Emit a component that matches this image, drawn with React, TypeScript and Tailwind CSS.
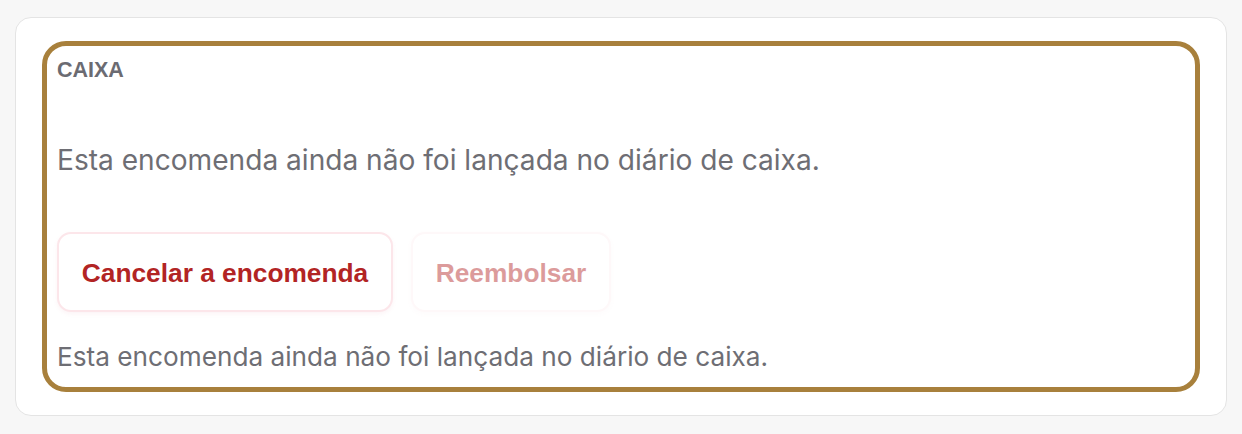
import React from "react";

export default function App() {
  return (
    <div className="w-[1242px] h-[434px] bg-[#f7f7f7] pt-[17px] pl-[15px]" style={{ fontFamily: "Inter, 'Liberation Sans', sans-serif" }}>
      <div className="w-[1212px] h-[399px] bg-white border border-[#e4e4e4] rounded-[16px] pt-[23px] px-[26px]">
        <div className="h-[351px] border-[5px] border-[#a8803c] rounded-[24px] pt-[10px] px-[10px]">
          <div className="text-[21.5px] leading-[28px] font-bold text-[#6b6b72] font-['Liberation_Sans',Arial,sans-serif]">CAIXA</div>
          <p className="mt-[58px] text-[28.1px] leading-[36px] text-[#6e6e74]">
            Esta encomenda ainda não foi lançada no diário de caixa.
          </p>
          <div className="mt-[54px] flex gap-[18px]">
            <button className="h-[80px] w-[336px] pt-[3px] rounded-[14px] border-2 border-[#fce6ea] bg-white shadow-[0_2px_4px_rgba(220,120,140,0.08)] text-[26.3px] font-bold text-[#b22424] font-['Liberation_Sans',Arial,sans-serif]">
              Cancelar a encomenda
            </button>
            <button disabled className="h-[80px] w-[200px] pt-[3px] rounded-[14px] border-2 border-[#fdf0f2] bg-white shadow-[0_2px_4px_rgba(220,120,140,0.05)] text-[26.3px] font-bold text-[#b22424] opacity-45 font-['Liberation_Sans',Arial,sans-serif]">
              Reembolsar
            </button>
          </div>
          <p className="mt-[28px] text-[26.2px] leading-[34px] text-[#6e6e74]">
            Esta encomenda ainda não foi lançada no diário de caixa.
          </p>
        </div>
      </div>
    </div>
  );
}
